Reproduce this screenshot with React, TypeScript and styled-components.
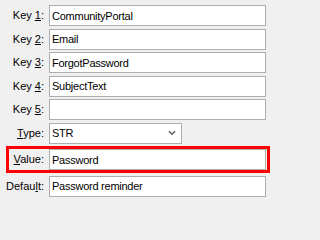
import React from "react";
import styled, { createGlobalStyle } from "styled-components";

const Global = createGlobalStyle`
  html, body { margin: 0; padding: 0; background: #f0f0f0; }
  body { width: 271px; height: 202px; overflow: hidden; }
`;

const Form = styled.div`
  display: flex;
  flex-direction: column;
  gap: 2.5px;
  padding: 5px 5px 0 0;
  font-family: "Liberation Sans", Arial, sans-serif;
  font-size: 11px;
  color: #000;
`;

const Row = styled.div<{ $highlight?: boolean }>`
  display: flex;
  align-items: center;
  ${(p) =>
    p.$highlight
      ? `
    margin: 0 -4px 0 6px;
    border: 3px solid #ff0000;
    padding-right: 1px;
  `
      : ""}
`;

const Label = styled.label<{ $highlight?: boolean }>`
  flex: none;
  width: ${(p) => (p.$highlight ? 35 : 44)}px;
  padding-right: 5px;
  text-align: right;
  white-space: nowrap;
  line-height: 13px;
  u { text-underline-offset: 1px; }
`;

const Input = styled.div`
  flex: 1;
  box-sizing: border-box;
  height: 21px;
  border: 1px solid #adadad;
  background: #fff;
  padding: 0 2px;
  display: flex;
  align-items: center;
  white-space: nowrap;
  overflow: hidden;
  letter-spacing: -0.25px;
`;

const Select = styled.div`
  box-sizing: border-box;
  width: 133px;
  height: 21px;
  border: 1px solid #adadad;
  background: #fff;
  padding: 0 2px;
  display: flex;
  align-items: center;
  justify-content: space-between;
  letter-spacing: -0.25px;
`;

const Chevron = () => (
  <svg width="8" height="6" viewBox="0 0 8 6" style={{ marginRight: 3 }}>
    <polyline points="1,1.2 4,4.2 7,1.2" fill="none" stroke="#606060" strokeWidth="1.6" />
  </svg>
);

const fields: { pre: string; key: string; post: string; value: string }[] = [
  { pre: "Key ", key: "1", post: ":", value: "CommunityPortal" },
  { pre: "Key ", key: "2", post: ":", value: "Email" },
  { pre: "Key ", key: "3", post: ":", value: "ForgotPassword" },
  { pre: "Key ", key: "4", post: ":", value: "SubjectText" },
  { pre: "Key ", key: "5", post: ":", value: "" },
];

export default function App() {
  return (
    <>
      <Global />
      <Form>
        {fields.map((f) => (
          <Row key={f.key}>
            <Label>
              {f.pre}
              <u>{f.key}</u>
              {f.post}
            </Label>
            <Input>{f.value}</Input>
          </Row>
        ))}
        <Row>
          <Label>
            <u>T</u>ype:
          </Label>
          <Select>
            <span>STR</span>
            <Chevron />
          </Select>
        </Row>
        <Row $highlight>
          <Label $highlight>
            <u>V</u>alue:
          </Label>
          <Input>Password</Input>
        </Row>
        <Row>
          <Label>
            Defau<u>l</u>t:
          </Label>
          <Input>Password reminder</Input>
        </Row>
      </Form>
    </>
  );
}
